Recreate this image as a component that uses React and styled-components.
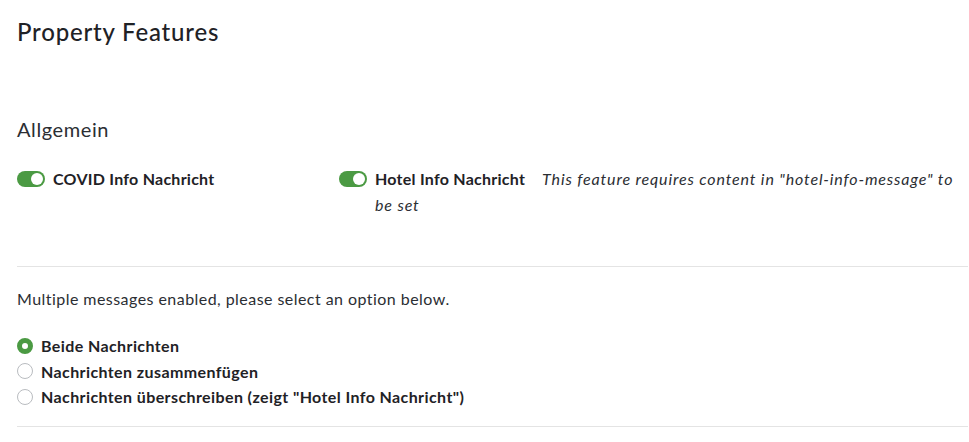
import React from "react";
import styled, { createGlobalStyle } from "styled-components";

const Global = createGlobalStyle`
	body {
		margin: 0;
		background: #fff;
		font-family: "Lato", "Open Sans", sans-serif;
		color: #222529;
	}
`;

const Page = styled.div`
	padding: 14px 1px 0 17px;
`;

const Title = styled.h1`
	margin: 0;
	font-size: 24px;
	font-weight: 500;
	line-height: 36px;
	letter-spacing: 0.8px;
	color: #1f2226;
`;

const Section = styled.h2`
	margin: 64px 0 0;
	font-size: 20px;
	font-weight: 400;
	line-height: 30px;
	letter-spacing: 0.6px;
	color: #2b2e33;
`;

const Features = styled.div`
	display: grid;
	grid-template-columns: 322px 1fr;
	margin-top: 22px;
	padding-bottom: 48px;
	border-bottom: 1px solid #e4e4e4;
`;

const Feature = styled.div`
	display: flex;
	align-items: flex-start;
	gap: 8px;
	font-size: 16px;
	line-height: 26px;
`;

const Toggle = styled.span`
	flex: none;
	position: relative;
	width: 28px;
	height: 16px;
	margin-top: 5px;
	border-radius: 8px;
	background: ${(p) => (p.$on ? "#4b9a43" : "#c8c8c8")};

	&::after {
		content: "";
		position: absolute;
		top: 2px;
		left: ${(p) => (p.$on ? "14px" : "2px")};
		width: 12px;
		height: 12px;
		border-radius: 50%;
		background: #fff;
	}
`;

const Label = styled.span`
	font-weight: 700;
	white-space: nowrap;
	letter-spacing: 0.25px;
	color: #1f2226;
	margin-right: 17px;
`;

const Note = styled.span`
	font-style: italic;
	font-weight: 400;
	letter-spacing: 0.85px;
	color: #2b2e33;
`;

const Info = styled.p`
	margin: 21px 0 0;
	font-size: 16px;
	line-height: 22px;
	letter-spacing: 0.45px;
	color: #2b2e33;
`;

const Options = styled.div`
	display: flex;
	flex-direction: column;
	margin-top: 23px;
	padding-bottom: 16px;
	border-bottom: 1px solid #e4e4e4;
`;

const Option = styled.label`
	display: flex;
	align-items: center;
	gap: 8px;
	height: 25.5px;
	font-size: 16px;
	font-weight: 700;
	letter-spacing: 0.4px;
	color: #1f2226;
`;

const Radio = styled.span`
	flex: none;
	box-sizing: border-box;
	width: 16px;
	height: 16px;
	border-radius: 50%;
	background: #fff;
	border: ${(p) => (p.$checked ? "5px solid #4b9a43" : "1px solid #b9bcc0")};
`;

const options = [
	"Beide Nachrichten",
	"Nachrichten zusammenfügen",
	'Nachrichten überschreiben (zeigt "Hotel Info Nachricht")',
];

export default function App() {
	return (
		<>
			<Global />
			<Page>
				<Title>Property Features</Title>
				<Section>Allgemein</Section>
				<Features>
					<Feature>
						<Toggle $on />
						<Label>COVID Info Nachricht</Label>
					</Feature>
					<Feature>
						<Toggle $on />
						<div>
							<Label>Hotel Info Nachricht</Label>
							<Note>
								This feature requires content in "hotel-info-message" to be set
							</Note>
						</div>
					</Feature>
				</Features>
				<Info>Multiple messages enabled, please select an option below.</Info>
				<Options>
					{options.map((o, i) => (
						<Option key={o}>
							<Radio $checked={i === 0} />
							{o}
						</Option>
					))}
				</Options>
			</Page>
		</>
	);
}
